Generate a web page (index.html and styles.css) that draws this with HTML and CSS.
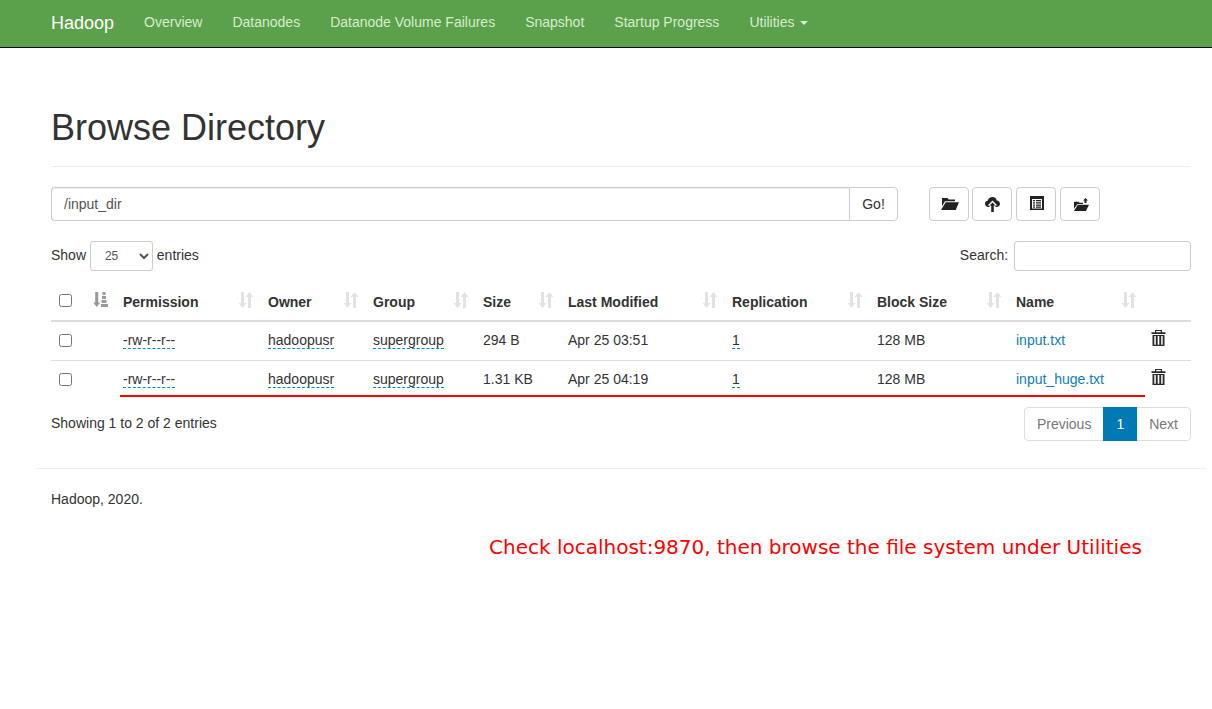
FILE: index.html
```html
<!DOCTYPE html>
<html lang="en">
<head>
  <meta charset="UTF-8">
  <meta name="viewport" content="width=device-width, initial-scale=1.0">
  <title>Browsing HDFS</title>
  <link rel="stylesheet" href="styles.css">
</head>
<body>
  <svg class="sprites" aria-hidden="true">
    <symbol id="sort" viewBox="0 0 15 16">
      <path d="M3 0h3v11h2.500L4.500 16 .5 11H3z"/>
      <path d="M10 16V5H7.500l4-5 4 5H13v11z"/>
    </symbol>
    <symbol id="trash" viewBox="0 0 15 16">
      <path d="M4 0h7v2.200h3.500V4H.5V2.200H4zM5.200 1.100v1.100h4.600V1.100z" fill-rule="evenodd"/>
      <path d="M1.500 5h12v11h-12zM3.300 6v8.800h1.500V6zm3.400 0v8.800h1.600V6zm3.500 0v8.800h1.500V6z" fill-rule="evenodd"/>
    </symbol>
  </svg>

  <nav class="navbar">
    <a class="brand" href="#">Hadoop</a>
    <ul class="nav-links">
      <li><a href="#">Overview</a></li>
      <li><a href="#">Datanodes</a></li>
      <li><a href="#">Datanode Volume Failures</a></li>
      <li><a href="#">Snapshot</a></li>
      <li><a href="#">Startup Progress</a></li>
      <li><a href="#">Utilities <span class="caret"></span></a></li>
    </ul>
  </nav>

  <div class="container">
    <div class="page-header">
      <h1>Browse Directory</h1>
    </div>

    <div class="toolbar">
      <div class="path-group">
        <input class="path-input" type="text" value="/input_dir">
        <button class="go-btn">Go!</button>
      </div>
      <div class="tool-btns">
        <button class="tool-btn nudge-right" title="Open">
          <svg width="18" height="12" viewBox="0 0 18 13" preserveAspectRatio="none"><path d="M1 0h5.500l1.200 1.500H14V3.500H4L1 9zM4.700 4.500H18L14.700 13H0z"/></svg>
        </button>
        <button class="tool-btn" title="Upload">
          <svg width="15" height="15" viewBox="0 0 15 15"><path d="M7.500 0c2.200 0 3.900 1.400 4.200 3.400C13.600 3.600 15 5 15 6.800c0 1.900-1.500 3.200-3.300 3.200h-1.300V8.600h2L7.500 3.500 2.600 8.600h2V10H3.300C1.400 10 0 8.700 0 6.800 0 5.200 1.200 3.900 2.800 3.600 3.400 1.400 5.200 0 7.500 0z"/><path d="M6.200 15V8.500H4.600l2.900-3.100 2.900 3.100H8.800V15z"/></svg>
        </button>
        <button class="tool-btn nudge-right nudge-up" title="Table">
          <svg width="14" height="14" viewBox="0 0 14 14"><path fill-rule="evenodd" d="M0 0h14v14H0zM2 3v9.500h10V3zM3 4h2v1.300H3zm3 0h5v1.300H6zM3 6.300h2v1.300H3zm3 0h5v1.300H6zM3 8.500h2v1.300H3zm3 0h5v1.300H6zM3 10.500h2v1.200H3zm3 0h5v1.200H6z"/></svg>
        </button>
        <button class="tool-btn nudge-right" title="Cut">
          <svg width="15" height="13" viewBox="0 0 15 14" preserveAspectRatio="none"><path d="M0 4h4.500l1 1.200H9v1.300H3.500L0 11.500zM3.800 7.300H15L12 14H0z"/><path d="M10.500 5.500V2.600H9.100L11.500 0l2.400 2.600h-1.400v2.900z"/></svg>
        </button>
      </div>
    </div>

    <div class="table-controls">
      <label class="length-label">Show
        <select class="length-select"><option>25</option></select>
        entries</label>
      <label class="search-label">Search:
        <input class="search-input" type="search">
      </label>
    </div>

    <table class="files">
      <colgroup>
        <col class="col-check"><col class="col-sort"><col class="col-perm"><col class="col-owner"><col class="col-group"><col class="col-size"><col class="col-date"><col class="col-repl"><col class="col-block"><col class="col-name"><col class="col-del">
      </colgroup>
      <thead>
        <tr>
          <th class="check-cell"><input type="checkbox"></th>
          <th class="sort-first"><svg class="sort-active" width="15" height="15" viewBox="0 0 15 15"><path d="M2.200 0h3v10.500h2L3.700 15 .2 10.500h2z"/><path d="M9.500 0h3v3h-3zM9 4h4v3H9zM8.500 8h5v3h-5zM8 12h7v3H8z"/></svg></th>
          <th>Permission<svg class="sort-icon"><use href="#sort"/></svg></th>
          <th>Owner<svg class="sort-icon"><use href="#sort"/></svg></th>
          <th>Group<svg class="sort-icon"><use href="#sort"/></svg></th>
          <th>Size<svg class="sort-icon"><use href="#sort"/></svg></th>
          <th>Last Modified<svg class="sort-icon"><use href="#sort"/></svg></th>
          <th>Replication<svg class="sort-icon"><use href="#sort"/></svg></th>
          <th>Block Size<svg class="sort-icon"><use href="#sort"/></svg></th>
          <th>Name<svg class="sort-icon"><use href="#sort"/></svg></th>
          <th></th>
        </tr>
      </thead>
      <tbody>
        <tr>
          <td class="check-cell"><input type="checkbox"></td>
          <td></td>
          <td><span class="editable">-rw-r--r--</span></td>
          <td><span class="editable">hadoopusr</span></td>
          <td><span class="editable">supergroup</span></td>
          <td>294 B</td>
          <td>Apr 25 03:51</td>
          <td><span class="editable">1</span></td>
          <td>128 MB</td>
          <td><a class="file-link" href="#">input.txt</a></td>
          <td class="trash-cell"><svg class="trash-icon"><use href="#trash"/></svg></td>
        </tr>
        <tr>
          <td class="check-cell"><input type="checkbox"></td>
          <td></td>
          <td><span class="editable">-rw-r--r--</span></td>
          <td><span class="editable">hadoopusr</span></td>
          <td><span class="editable">supergroup</span></td>
          <td>1.31 KB</td>
          <td>Apr 25 04:19</td>
          <td><span class="editable">1</span></td>
          <td>128 MB</td>
          <td><a class="file-link" href="#">input_huge.txt</a></td>
          <td class="trash-cell"><svg class="trash-icon"><use href="#trash"/></svg></td>
        </tr>
      </tbody>
    </table>
    <div class="red-underline"></div>

    <div class="table-footer">
      <div class="table-info">Showing 1 to 2 of 2 entries</div>
      <ul class="pagination">
        <li class="page-item">Previous</li>
        <li class="page-item current">1</li>
        <li class="page-item">Next</li>
      </ul>
    </div>
  </div>

  <hr class="footer-rule">
  <footer class="footer">
    <p>Hadoop, 2020.</p>
    <p class="note">Check localhost:9870, then browse the file system under Utilities</p>
  </footer>
</body>
</html>
```

FILE: styles.css
```css
* {
  box-sizing: border-box;
}
body {
  margin: 0;
  font-family: "Liberation Sans", Arial, sans-serif;
  font-size: 14px;
  line-height: 20px;
  color: #333;
  background-color: #fff;
}
.sprites {
  display: none;
}

/* navbar */
.navbar {
  display: flex;
  height: 48px;
  padding-left: 51px;
  background-color: #5ba04a;
  border-bottom: 1px solid #080808;
}
.brand {
  font-size: 18px;
  line-height: 47px;
  color: #fff;
  text-decoration: none;
  margin-right: 15px;
}
.nav-links {
  display: flex;
  margin: 0;
  padding: 0;
  list-style: none;
}
.nav-links a {
  display: block;
  padding: 0 15px;
  line-height: 45px;
  color: #d8ecd0;
  text-decoration: none;
}
.caret {
  display: inline-block;
  margin-left: 2px;
  vertical-align: middle;
  border-top: 4px solid;
  border-left: 4px solid transparent;
  border-right: 4px solid transparent;
}

/* page */
.container {
  width: 1140px;
  margin-left: 51px;
}
.page-header {
  height: 119px;
  padding-top: 60px;
  border-bottom: 1px solid #eee;
}
h1 {
  margin: 0;
  font-size: 36px;
  font-weight: 500;
  line-height: 40px;
}
.toolbar {
  display: flex;
  margin-top: 20px;
}
.path-group {
  display: flex;
  width: 847px;
}
.path-input {
  flex: 1;
  height: 34px;
  padding: 6px 12px;
  font: inherit;
  color: #555;
  border: 1px solid #ccc;
  border-right: 0;
  border-radius: 4px 0 0 4px;
  box-shadow: inset 0 1px 1px rgba(0, 0, 0, .075);
}
.go-btn {
  width: 49px;
  height: 34px;
  padding: 0;
  font: inherit;
  color: #333;
  background: #fff;
  border: 1px solid #ccc;
  border-radius: 0 4px 4px 0;
}
.tool-btns {
  display: flex;
  gap: 4px;
  margin-left: 31px;
}
.tool-btn {
  display: flex;
  align-items: center;
  justify-content: center;
  width: 40px;
  height: 34px;
  padding: 0;
  background: #fff;
  border: 1px solid #ccc;
  border-radius: 4px;
}
.tool-btn:first-child {
  margin-right: -1px;
}
.tool-btn.nudge-right {
  padding-left: 2px;
}
.tool-btn.nudge-up {
  padding-bottom: 2px;
}
.tool-btn svg {
  fill: #222;
}

.table-controls {
  display: flex;
  justify-content: space-between;
  align-items: center;
  margin-top: 20px;
  height: 30px;
}
.length-select {
  width: 63px;
  height: 30px;
  padding: 5px 10px;
  font: 12px "Liberation Sans", Arial, sans-serif;
  color: #555;
  background: #fff;
  border: 1px solid #ccc;
  border-radius: 3px;
}
.search-input {
  width: 177px;
  height: 30px;
  margin-left: 2px;
  vertical-align: middle;
  border: 1px solid #ccc;
  border-radius: 3px;
}

/* table */
.files {
  width: 1140px;
  margin-top: 10px;
  border-collapse: collapse;
  table-layout: fixed;
}
.col-check { width: 34px; }
.col-sort { width: 30px; }
.col-perm { width: 145px; }
.col-owner { width: 105px; }
.col-group { width: 110px; }
.col-size { width: 85px; }
.col-date { width: 164px; }
.col-repl { width: 145px; }
.col-block { width: 139px; }
.col-name { width: 135px; }
.col-del { width: 48px; }
.files th {
  position: relative;
  height: 40px;
  padding: 2px 8px 0;
  text-align: left;
  vertical-align: middle;
  border-bottom: 2px solid #ddd;
}
.files td {
  height: 39px;
  padding: 0 8px 2px;
  vertical-align: middle;
  border-top: 1px solid #ddd;
}
.files thead + tbody tr:first-child td {
  border-top: 0;
}
.files .check-cell {
  padding: 0 8px;
}
.files .trash-cell {
  padding-bottom: 5px;
}
.files input[type="checkbox"] {
  display: block;
  margin: 0;
  width: 13px;
  height: 13px;
}
.files .sort-first {
  padding: 0;
}
.sort-active {
  display: block;
  margin: 0 0 2px 8px;
  fill: #999;
}
.sort-icon {
  position: absolute;
  right: 7px;
  top: 11px;
  width: 15px;
  height: 16px;
  fill: #e2e2e2;
}
.editable {
  border-bottom: 1px dashed #08c;
}
.file-link {
  color: #0f7fb5;
  text-decoration: none;
}
.trash-icon {
  display: block;
  width: 15px;
  height: 16px;
  fill: #2a2a2a;
}
.red-underline {
  position: absolute;
  left: 120px;
  top: 395px;
  width: 1025px;
  height: 2px;
  background: #f00;
}

.table-footer {
  display: flex;
  justify-content: space-between;
  margin-top: 8px;
}
.table-info {
  padding-top: 6px;
}
.pagination {
  display: flex;
  margin: 0;
  padding: 0;
  list-style: none;
}
.page-item {
  height: 34px;
  padding: 6px 12px;
  color: #777;
  border: 1px solid #ddd;
  margin-left: -1px;
}
.page-item:first-child {
  border-radius: 4px 0 0 4px;
}
.page-item:last-child {
  border-radius: 0 4px 4px 0;
}
.page-item.current {
  position: relative;
  z-index: 1;
  color: #fff;
  background: #007ab5;
  border-color: #007ab5;
}

/* footer */
.footer-rule {
  width: 1170px;
  margin: 27px 0 0 36px;
  border: 0;
  border-top: 1px solid #eee;
}
.footer {
  padding-left: 51px;
}
.footer p {
  margin: 20px 0 0;
}
.footer .note {
  margin: 26px 0 0 438px;
  font-family: "DejaVu Sans", sans-serif;
  font-size: 20px;
  line-height: 24px;
  color: #f00;
}
```
